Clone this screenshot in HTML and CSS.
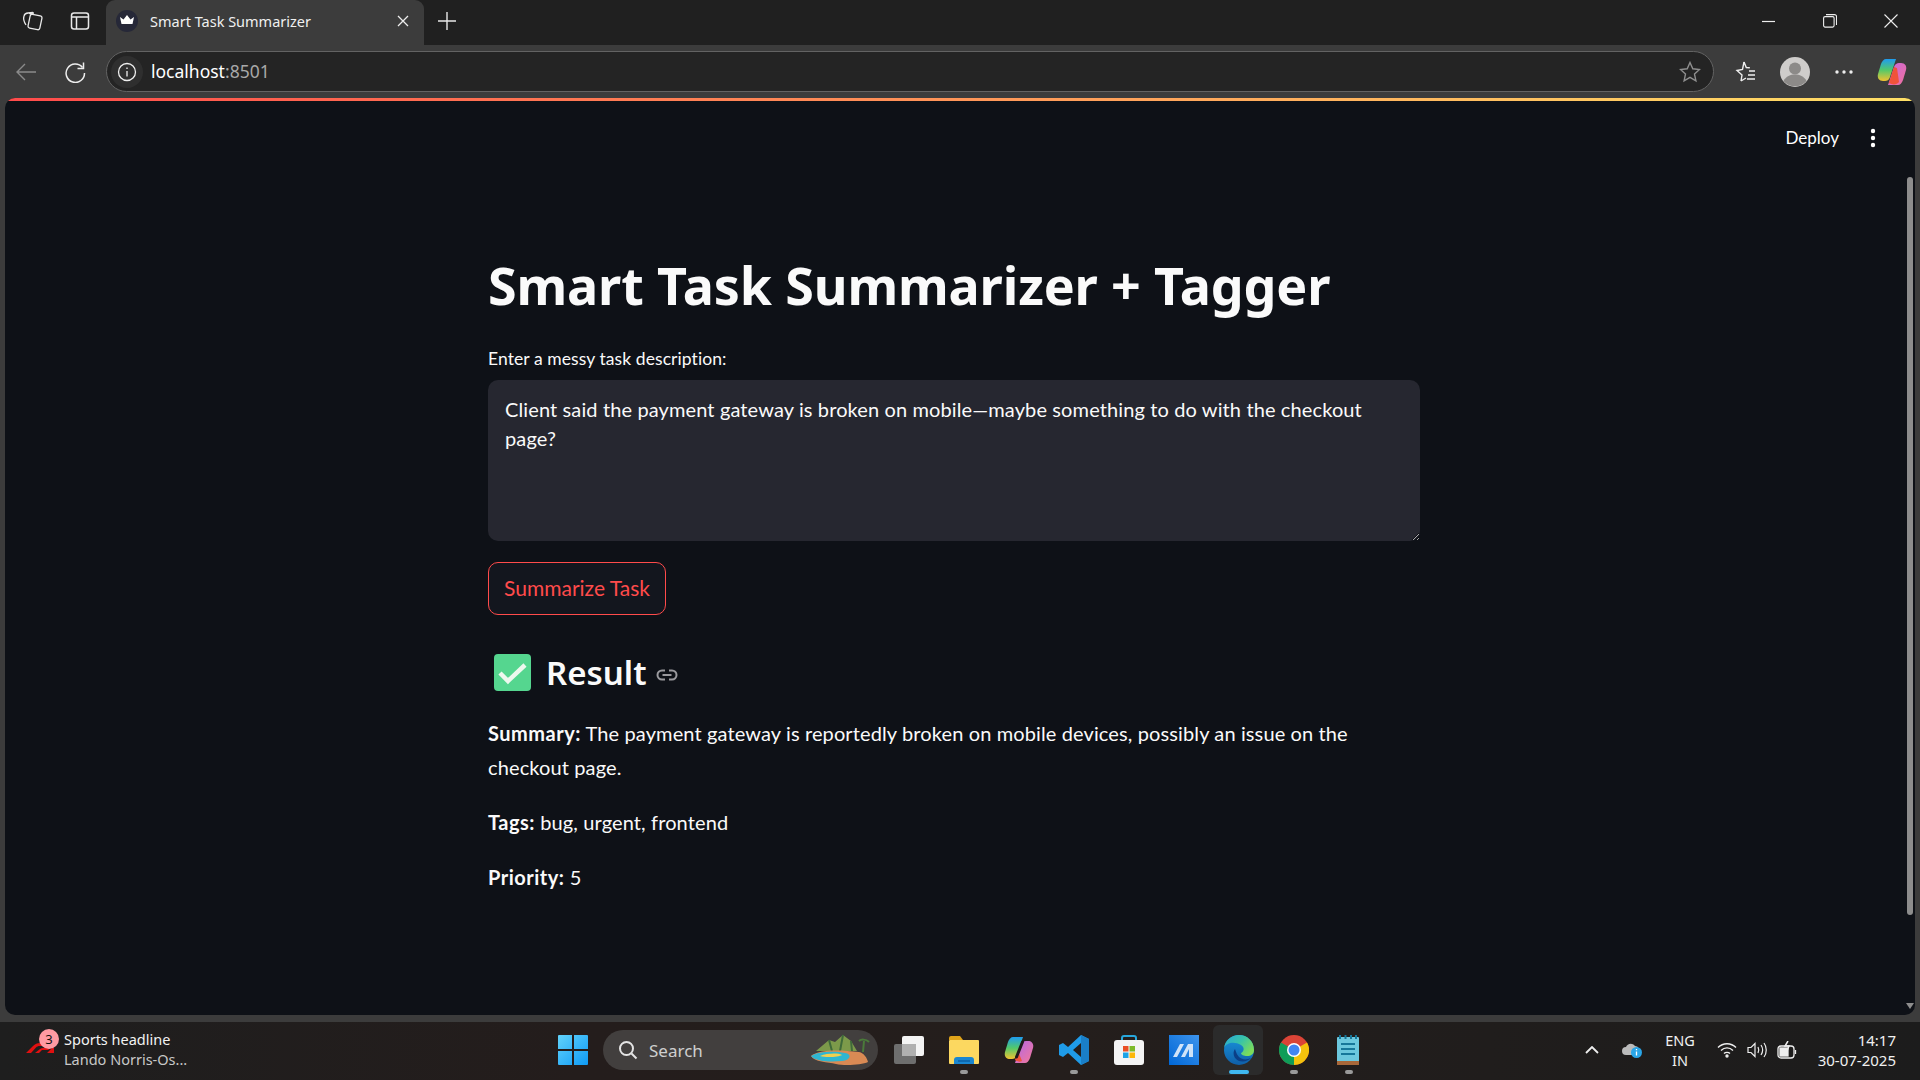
FILE: index.html
```html
<!DOCTYPE html>
<html lang="en">
<head>
    <meta charset="UTF-8">
    <title>Smart Task Summarizer</title>
    <link rel="stylesheet" href="styles.css">
</head>
<body>
    <!-- browser tabs -->
    <div class="tabstrip">
        <div class="strip-btn first">
            <svg width="22" height="22" viewBox="0 0 22 22" fill="none" stroke="#e8e8e8" stroke-width="1.3"><rect x="8" y="5" width="12" height="14" rx="2" transform="rotate(12 14 12)"/><path d="M5 15C3 12 2 9 3 6c.5-2 2-2.800 4-3l5-.5"/><path d="M8 3.500 13 3"/></svg>
        </div>
        <div class="strip-btn">
            <svg width="20" height="20" viewBox="0 0 20 20" fill="none" stroke="#e8e8e8" stroke-width="1.500"><rect x="1.500" y="2" width="17" height="16" rx="2.500"/><path d="M1.500 6h17M6.500 6v12"/></svg>
        </div>
        <div class="tab">
            <span class="favicon">
                <svg width="14" height="11" viewBox="0 0 14 11" fill="#fff"><path d="M0 2l3.500 2.500L7 0l3.500 4.500L14 2l-1.500 7h-11z"/></svg>
            </span>
            <span class="tab-title">Smart Task Summarizer</span>
            <svg class="tab-close" width="12" height="12" viewBox="0 0 12 12" stroke="#eee" stroke-width="1.300"><path d="M1 1l10 10M11 1L1 11"/></svg>
        </div>
        <svg class="new-tab" width="18" height="18" viewBox="0 0 18 18" stroke="#e8e8e8" stroke-width="1.400"><path d="M9 0v18M0 9h18"/></svg>
        <div class="window-btns">
            <svg width="14" height="14" viewBox="0 0 14 14" stroke="#eee" stroke-width="1.200"><path d="M0 7.500h13"/></svg>
            <svg width="14" height="14" viewBox="0 0 14 14" fill="none" stroke="#eee" stroke-width="1.100"><rect x=".6" y="2.600" width="10.500" height="10.500" rx="1.500"/><path d="M3 .6h8.500a2 2 0 0 1 2 2V11"/></svg>
            <svg width="14" height="14" viewBox="0 0 14 14" stroke="#eee" stroke-width="1.100"><path d="M.5.500l13 13M13.500.500l-13 13"/></svg>
        </div>
    </div>

    <!-- address bar -->
    <div class="toolbar">
        <svg class="nav-icon back" width="22" height="20" viewBox="0 0 22 20" fill="none" stroke="#8a8a8a" stroke-width="1.400"><path d="M21 10H2M10 2l-8 8 8 8"/></svg>
        <svg class="nav-icon reload" width="22" height="22" viewBox="0 0 22 22" fill="none" stroke="#eee" stroke-width="1.500"><path d="M18.500 6.500A9.200 9.200 0 1 0 20.500 12"/><path d="M19.500 1.500v6h-6"/></svg>
        <div class="address">
            <span class="info-wrap">
                <svg width="20" height="20" viewBox="0 0 20 20" fill="none" stroke="#eee" stroke-width="1.300"><circle cx="10" cy="10" r="8.500"/><path d="M10 9v5.500M10 5.500v1.500"/></svg>
            </span>
            <span class="url">localhost<span class="url-port">:8501</span></span>
            <svg class="star" width="22" height="22" viewBox="0 0 22 22" fill="none" stroke="#8f8f8f" stroke-width="1.400"><path d="M11 1.500l2.800 6.300 6.700.7-5 4.600 1.400 6.700L11 16.400l-5.900 3.400 1.400-6.700-5-4.600 6.700-.7z"/></svg>
        </div>
        <div class="tool-icons">
            <svg width="22" height="22" viewBox="0 0 22 22" fill="none" stroke="#eee" stroke-width="1.400"><path d="M10 1l2.300 5.500 3.500.3M7 20l1-6-5-4.500 5.500-1L10 1M7 20l5-3"/><path d="M15 10h6M14 14h7M13 18h8"/></svg>
            <svg width="30" height="30" viewBox="0 0 30 30"><circle cx="15" cy="15" r="15" fill="#cfcdcb"/><circle cx="15" cy="11.500" r="6" fill="#8c8a88"/><path d="M3.500 24c2.500-5 7-6.500 11.500-6.500S24 19 26.500 24A15 15 0 0 1 3.500 24z" fill="#8c8a88"/></svg>
            <svg width="18" height="4" viewBox="0 0 18 4" fill="#eee"><circle cx="2" cy="2" r="1.700"/><circle cx="9" cy="2" r="1.700"/><circle cx="16" cy="2" r="1.700"/></svg>
            <svg width="30" height="28" viewBox="0 0 30 28">
                <defs>
                    <linearGradient id="copA" x1="0" y1="0" x2="0" y2="1"><stop offset="0" stop-color="#1f9cf0"/><stop offset=".5" stop-color="#52c96a"/><stop offset="1" stop-color="#f2c230"/></linearGradient>
                    <linearGradient id="copB" x1="0" y1="0" x2="1" y2="1"><stop offset="0" stop-color="#c868e0"/><stop offset="1" stop-color="#f0709a"/></linearGradient>
                </defs>
                <path d="M9 1h10l-6 18c-1 3-3 4-5 4H6c-4 0-6-3-5-7l3-10c1-3 3-5 5-5z" fill="url(#copA)"/>
                <path d="M21 27H11l6-18c1-3 3-4 5-4h2c4 0 6 3 5 7l-3 10c-1 3-3 5-5 5z" fill="url(#copB)"/>
                <path d="M17 9l-5 16c3 2 8 2 10-1l-2-14z" fill="#f0533a"/>
            </svg>
        </div>
    </div>

    <!-- the streamlit page -->
    <div class="viewport">
        <main class="app">
            <div class="accent-bar"></div>
            <div class="app-header">
                <span class="deploy">Deploy</span>
                <svg width="6" height="20" viewBox="0 0 6 20" fill="#fff"><circle cx="3" cy="3" r="2.200"/><circle cx="3" cy="10" r="2.200"/><circle cx="3" cy="17" r="2.200"/></svg>
            </div>
            <div class="content">
                <h1>Smart Task Summarizer + Tagger</h1>
                <label class="field-label" for="task">Enter a messy task description:</label>
                <div class="textarea-wrap">
                    <textarea id="task">Client said the payment gateway is broken on mobile—maybe something to do with the checkout page?</textarea>
                </div>
                <button class="summarize-btn">Summarize Task</button>
                <h3 class="result-heading">
                    <svg class="check" width="37" height="37" viewBox="0 0 37 37"><rect width="37" height="37" rx="4" fill="#55d68f"/><path d="M6 19l8 8L31 11" fill="none" stroke="#eef8ee" stroke-width="4.500"/></svg>
                    <span>Result</span>
                    <svg class="link-icon" width="22" height="12" viewBox="0 0 22 12" fill="none" stroke="#9a9a9e" stroke-width="2"><path d="M9 1.500H6a4.500 4.500 0 0 0 0 9h3M13 1.500h3a4.500 4.500 0 0 1 0 9h-3M6.500 6h9"/></svg>
                </h3>
                <p><strong>Summary:</strong> The payment gateway is reportedly broken on mobile devices, possibly an issue on the checkout page.</p>
                <p><strong>Tags:</strong> bug, urgent, frontend</p>
                <p><strong>Priority:</strong> 5</p>
            </div>
            <div class="scroll-thumb"></div>
            <div class="scroll-arrow"></div>
        </main>
    </div>

    <!-- windows taskbar -->
    <footer class="taskbar">
        <div class="news">
            <span class="news-logo">
                <svg width="28" height="10" viewBox="0 0 28 10" fill="#e01010"><path d="M0 10l7-7c2-2 4-3 7-3h14l-4 3H14c-2 0-3 .5-4 1.500L5 10zM9 10l5-4c1-.8 2-1 3-1h8l-3 2h-5c-1 0-1.500.3-2 1l-2 2zM21 10l5-5h2v5z"/></svg>
                <span class="news-badge">3</span>
            </span>
            <div class="news-text">
                <span>Sports headline</span>
                <span class="news-sub">Lando Norris-Os...</span>
            </div>
        </div>

        <div class="task-icons">
            <span class="slot">
                <svg width="30" height="30" viewBox="0 0 30 30">
                    <defs><linearGradient id="winG" x1="0" y1="0" x2="1" y2="1"><stop offset="0" stop-color="#62d3fb"/><stop offset="1" stop-color="#0f9af5"/></linearGradient></defs>
                    <path d="M0 1a1 1 0 0 1 1-1h13v14H0zM16 0h13a1 1 0 0 1 1 1v13H16zM0 16h14v14H1a1 1 0 0 1-1-1zM16 16h14v13a1 1 0 0 1-1 1H16z" fill="url(#winG)"/>
                </svg>
            </span>
            <div class="search">
                <svg width="20" height="20" viewBox="0 0 20 20" fill="none" stroke="#e4e4e4" stroke-width="2"><circle cx="8.500" cy="8.500" r="6.500"/><path d="M13.500 13.500l5 5"/></svg>
                <span>Search</span>
                <svg class="island" width="60" height="32" viewBox="0 0 60 32">
                    <path d="M6 17L19 6l6 2 8-7 8 6 6 10z" fill="#7c9a4a"/>
                    <path d="M19 6l3 11M33 1l-3 16M41 7l1 10" stroke="#3f6a3a" stroke-width="2"/>
                    <path d="M1 22c8-7 30-6 48-4 5 1 8 6 9 10-6 3-24 4-32 2C18 28 4 28 1 22z" fill="#d98a54"/>
                    <path d="M1 22c8-5 24-5 34-3 7 1 6 7-3 8-10 1-26 1-31-5z" fill="#2fb6d0"/>
                    <path d="M10 22c8-3 18-3 22-1-3 2-16 3-22 1z" fill="#f0d050"/>
                    <path d="M53 18l1-11M49 7c2-2 7-2 10 1" stroke="#4a7a3a" stroke-width="2" fill="none"/>
                </svg>
            </div>
            <span class="slot">
                <svg width="30" height="28" viewBox="0 0 30 28"><rect y="8" width="22" height="20" rx="2" fill="#6e6e6e"/><rect x="8" width="22" height="20" rx="2" fill="#f4f4f4"/><rect x="8" y="8" width="14" height="12" fill="#b0b0b0"/></svg>
            </span>
            <span class="slot running">
                <svg width="30" height="28" viewBox="0 0 30 28"><path d="M0 2a2 2 0 0 1 2-2h9l3 4H0z" fill="#e0a41a"/><rect y="4" width="30" height="24" rx="1" fill="#fcd860"/><path d="M5 28v-4a3 3 0 0 1 3-3h14a3 3 0 0 1 3 3v4z" fill="#1a86d0"/><path d="M9 25h12" stroke="#0b5fa5" stroke-width="1.500"/></svg>
            </span>
            <span class="slot">
                <svg width="30" height="28" viewBox="0 0 30 28">
                    <defs>
                        <linearGradient id="copC" x1="0" y1="0" x2="0" y2="1"><stop offset="0" stop-color="#1f9cf0"/><stop offset=".5" stop-color="#52c96a"/><stop offset="1" stop-color="#f2c230"/></linearGradient>
                        <linearGradient id="copD" x1="0" y1="0" x2="1" y2="1"><stop offset="0" stop-color="#b068e8"/><stop offset="1" stop-color="#f5789a"/></linearGradient>
                    </defs>
                    <path d="M9 1h10l-6 18c-1 3-3 4-5 4H6c-4 0-6-3-5-7l3-10c1-3 3-5 5-5z" fill="url(#copC)"/>
                    <path d="M21 27H11l6-18c1-3 3-4 5-4h2c4 0 6 3 5 7l-3 10c-1 3-3 5-5 5z" fill="url(#copD)"/>
                    <path d="M14 15l-3 9c3 2 5 2 7 1z" fill="#f0533a"/>
                    <path d="M18.500 6l-6 15" stroke="#1f1a1a" stroke-width="3" stroke-linecap="round"/>
                </svg>
            </span>
            <span class="slot running">
                <svg width="30" height="30" viewBox="0 0 30 30"><path d="M22 0l8 4v22l-8 4-13-12-5 4-4-2V10l4-2 5 4zM22 8l-8 7 8 7z" fill="#1f9be8"/><path d="M22 0l8 4v22l-8 4z" fill="#1a7fc8"/></svg>
            </span>
            <span class="slot">
                <svg width="30" height="30" viewBox="0 0 30 30"><path d="M8 6V3a2 2 0 0 1 2-2h10a2 2 0 0 1 2 2v3" fill="none" stroke="#27a7dc" stroke-width="2"/><rect y="5" width="30" height="25" rx="3" fill="#f4f4f4"/><rect x="9" y="11" width="5.500" height="5.500" fill="#ea4f25"/><rect x="15.500" y="11" width="5.500" height="5.500" fill="#7dba2a"/><rect x="9" y="17.500" width="5.500" height="5.500" fill="#1ca2e6"/><rect x="15.500" y="17.500" width="5.500" height="5.500" fill="#fdb80b"/></svg>
            </span>
            <span class="slot">
                <svg width="30" height="30" viewBox="0 0 30 30">
                    <defs><linearGradient id="mG" x1="0" y1="1" x2="1" y2="0"><stop offset="0" stop-color="#0067d6"/><stop offset="1" stop-color="#3d94ec"/></linearGradient></defs>
                    <rect width="30" height="30" fill="url(#mG)"/>
                    <path d="M4 22l7-13h4L8 22zM12 22l7-13h5v13h-4v-8l-4 8z" fill="#cfe3f8"/>
                </svg>
            </span>
            <span class="slot active">
                <svg width="30" height="30" viewBox="0 0 30 30">
                    <defs>
                        <linearGradient id="edgeA" x1="0" y1="0" x2="1" y2=".6"><stop offset="0" stop-color="#2aa8d8"/><stop offset=".55" stop-color="#38c4a8"/><stop offset="1" stop-color="#7cdc5a"/></linearGradient>
                        <linearGradient id="edgeB" x1="0" y1="0" x2="0" y2="1"><stop offset="0" stop-color="#1a96de"/><stop offset="1" stop-color="#0f5fa8"/></linearGradient>
                    </defs>
                    <circle cx="15" cy="15" r="15" fill="url(#edgeB)"/>
                    <path d="M0 13C1 5 8 0 15 0c8 0 15 6 15 15 0 4-3 6-7 6-3 0-6-1-6-3 3-1 4-6 0-8C10 6 2 8 0 13z" fill="url(#edgeA)"/>
                    <path d="M11 14c-3 4-1 10 4 12 5 1 9 0 12-3-4 2-9 2-12-1-2-2-3-5-4-8z" fill="#0b3f86"/>
                </svg>
            </span>
            <span class="slot running">
                <svg width="30" height="30" viewBox="0 0 30 30"><circle cx="15" cy="15" r="15" fill="#db4437"/><path d="M15 15L28 7.500A15 15 0 0 1 15 30z" fill="#f4c20d"/><path d="M15 15v15A15 15 0 0 1 2 7.500z" fill="#0f9d58"/><circle cx="15" cy="15" r="7" fill="#fff"/><circle cx="15" cy="15" r="5.500" fill="#4285f4"/></svg>
            </span>
            <span class="slot running">
                <svg width="24" height="30" viewBox="0 0 24 30"><rect y="2" width="22" height="28" rx="1" fill="#6cc8de"/><rect y="26" width="22" height="4" fill="#a8683a"/><path d="M4 9h14M4 14h14M4 19h14" stroke="#16779a" stroke-width="2"/><path d="M3 0v4M8.500 0v4M14 0v4M19 0v4" stroke="#16779a" stroke-width="2"/></svg>
            </span>
        </div>

        <div class="tray">
            <svg class="tray-chevron" width="14" height="8" viewBox="0 0 14 8" fill="none" stroke="#eee" stroke-width="1.800"><path d="M1 7l6-6 6 6"/></svg>
            <svg class="tray-cloud" width="20" height="16" viewBox="0 0 20 16"><path d="M4 13a4 4 0 0 1 0-8c1-3 6-5 9-1 3 0 5 3 3 6l-3 3z" fill="#bbb"/><circle cx="14.500" cy="10.500" r="5.500" fill="#2aa6e8"/><path d="M14.500 9.500v4M14.500 7v1.200" stroke="#fff" stroke-width="1.300"/></svg>
            <div class="lang"><span>ENG</span><span>IN</span></div>
            <svg width="20" height="16" viewBox="0 0 20 16" fill="none" stroke="#eee" stroke-width="1.400"><path d="M1 5.500c5-5 13-5 18 0M4 8.500c3.500-3.500 8.500-3.500 12 0M7 11.500c1.500-1.500 4.500-1.500 6 0"/><circle cx="10" cy="14" r="1" fill="#eee"/></svg>
            <svg width="20" height="16" viewBox="0 0 20 16" fill="none" stroke="#eee" stroke-width="1.200"><path d="M1 5.500h3l4-4v13l-4-4H1zM11 5c1 2 1 4 0 6M14 3c2 3 2 7 0 10M17 1c3 4 3 10 0 14"/></svg>
            <svg width="20" height="18" viewBox="0 0 20 18" fill="none" stroke="#eee" stroke-width="1.300"><rect x="1" y="5" width="16" height="12" rx="3"/><rect x="3" y="7" width="8" height="8" fill="#eee"/><path d="M18.500 9v4"/><path d="M11 0L8 5h4l-2 5" stroke-width="1.500"/></svg>
            <div class="clock"><span>14:17</span><span>30-07-2025</span></div>
        </div>
    </footer>
</body>
</html>
```

FILE: styles.css
```css
* {
    box-sizing: border-box;
}
html, body {
    height: 100%;
}
body {
    margin: 0;
    display: flex;
    flex-direction: column;
    overflow: hidden;
    background-color: #3c3c3c;
    color: #fff;
    font-family: "Noto Sans", sans-serif;
}

/* browser chrome */
.tabstrip {
    height: 45px;
    flex: none;
    display: flex;
    align-items: center;
    background-color: #202020;
}
.strip-btn {
    width: 47px;
    margin-bottom: 3px;
    display: flex;
    justify-content: center;
}
.strip-btn.first {
    width: 56px;
    padding-left: 8px;
}
.tab {
    width: 318px;
    height: 45px;
    margin-left: 3px;
    padding: 0 15px 4px 10px;
    display: flex;
    align-items: center;
    background-color: #3c3c3c;
    border-radius: 9px 9px 0 0;
}
.favicon {
    width: 22px;
    height: 22px;
    border-radius: 50%;
    background-color: #262838;
    display: flex;
    align-items: center;
    justify-content: center;
}
.tab-title {
    flex: 1;
    margin-left: 12px;
    font-size: 14.500px;
    color: #f0f0f0;
}
.new-tab {
    margin-left: 14px;
    margin-bottom: 3px;
}
.window-btns {
    margin-left: auto;
    margin-bottom: 3px;
    padding-right: 22px;
    display: flex;
    gap: 47px;
    align-items: center;
}

.toolbar {
    height: 53px;
    flex: none;
    display: flex;
    align-items: center;
    background-color: #3c3c3c;
}
.nav-icon.back {
    margin-left: 15px;
}
.nav-icon.reload {
    margin-left: 27px;
}
.address {
    width: 1608px;
    height: 41px;
    margin-left: 20px;
    display: flex;
    align-items: center;
    background-color: #242424;
    border: 1px solid #636363;
    border-radius: 21px;
}
.info-wrap {
    width: 32px;
    height: 32px;
    margin-left: 4px;
    border-radius: 50%;
    background-color: #2f2f2f;
    display: flex;
    align-items: center;
    justify-content: center;
}
.url {
    margin-left: 8px;
    margin-bottom: 2px;
    font-size: 17.500px;
    color: #fff;
}
.url-port {
    color: #a8a8a8;
}
.star {
    margin-left: auto;
    margin-right: 12px;
}
.tool-icons {
    flex: 1;
    padding: 0 13px 0 20px;
    display: flex;
    align-items: center;
    justify-content: space-between;
}

/* streamlit app */
.viewport {
    flex: 1;
    min-height: 0;
    padding: 0 5px;
    background-color: #3c3c3c;
}
.app {
    position: relative;
    height: 100%;
    overflow: hidden;
    background-color: #0e1117;
    border-radius: 10px;
}
.accent-bar {
    height: 3px;
    background: linear-gradient(90deg, #ff4b4b, #ffe066);
}
.app-header {
    height: 64px;
    padding: 9px 39px 0 0;
    display: flex;
    justify-content: flex-end;
    align-items: center;
    gap: 31px;
}
.deploy {
    font-family: Lato, sans-serif;
    font-size: 17px;
}
.content {
    width: 932px;
    margin-left: 483px;
    padding-top: 87px;
    font-family: Lato, sans-serif;
}
h1 {
    margin: 0;
    font-family: "Noto Sans", sans-serif;
    font-size: 52px;
    line-height: 66px;
    font-weight: 700;
    letter-spacing: -.13px;
    color: #fafafa;
}
.field-label {
    display: block;
    margin-top: 30px;
    font-size: 17.500px;
    line-height: 22px;
    letter-spacing: .08px;
    color: #fafafa;
}
.textarea-wrap {
    height: 161px;
    margin-top: 10px;
}
textarea {
    display: block;
    width: 100%;
    height: 100%;
    padding: 15px 17px;
    border: none;
    border-radius: 10px;
    outline: none;
    font-family: Lato, sans-serif;
    font-size: 20px;
    line-height: 29px;
    letter-spacing: .12px;
    color: #fafafa;
    background-color: #262730;
}
.summarize-btn {
    display: block;
    width: 178px;
    height: 53px;
    margin-top: 21px;
    padding-bottom: 3px;
    border: 1px solid #ff4b4b;
    border-radius: 10px;
    font-family: Lato, sans-serif;
    font-size: 21px;
    color: #ff4b4b;
    background-color: #13161e;
}
.result-heading {
    height: 50px;
    margin: 32px 0 0;
    display: flex;
    align-items: center;
    font-family: "Noto Sans", sans-serif;
    font-size: 33px;
    font-weight: 600;
    color: #fafafa;
}
.check {
    margin-left: 6px;
    margin-right: 15px;
}
.link-icon {
    margin-left: 9px;
    margin-top: 6px;
}
p {
    margin: 0 0 21px;
    font-size: 20px;
    line-height: 34px;
    letter-spacing: .12px;
    color: #fafafa;
}
.result-heading + p {
    margin-top: 19px;
}
strong {
    font-weight: 700;
    letter-spacing: .5px;
}
.scroll-thumb {
    position: absolute;
    top: 79px;
    right: 2px;
    width: 6px;
    height: 738px;
    border-radius: 3px;
    background-color: #8d8d8d;
}
.scroll-arrow {
    position: absolute;
    right: 1px;
    bottom: 6px;
    border-left: 4px solid transparent;
    border-right: 4px solid transparent;
    border-top: 6px solid #8d8d8d;
}

/* windows taskbar */
.taskbar {
    height: 58px;
    flex: none;
    margin-top: 7px;
    display: flex;
    align-items: center;
    background: linear-gradient(90deg, #1e1e1e 0%, #241d1c 30%, #241e1c 55%, #1c1c1c 100%);
}
.news {
    width: 545px;
    padding: 0 0 4px 26px;
    display: flex;
    align-items: center;
}
.news-logo {
    position: relative;
    width: 38px;
    height: 30px;
    display: flex;
    align-items: flex-end;
    padding-bottom: 11px;
}
.news-badge {
    position: absolute;
    top: -5px;
    left: 13px;
    width: 20px;
    height: 20px;
    border-radius: 50%;
    background-color: #ff9aa2;
    color: #111;
    font-size: 13px;
    line-height: 20px;
    text-align: center;
}
.news-text {
    display: flex;
    flex-direction: column;
    font-size: 14.500px;
    line-height: 20px;
    color: #f2f2f2;
}
.news-sub {
    color: #c8c8c8;
}
.task-icons {
    margin-bottom: 2px;
    display: flex;
    align-items: center;
}
.slot {
    position: relative;
    width: 55px;
    height: 50px;
    display: flex;
    align-items: center;
    justify-content: center;
}
.slot > svg {
    position: relative;
}
.slot.active::before {
    content: "";
    position: absolute;
    top: 0;
    bottom: 0;
    left: 2px;
    right: 3px;
    border-radius: 6px;
    background-color: #2b2b2b;
}
.slot.running::after,
.slot.active::after {
    content: "";
    position: absolute;
    bottom: 1px;
    left: 50%;
    width: 8px;
    height: 4px;
    margin-left: -4px;
    border-radius: 2px;
    background-color: #9a9a9a;
}
.slot.active::after {
    width: 20px;
    margin-left: -10px;
    background-color: #3fb8f0;
}
.search {
    width: 275px;
    height: 40px;
    margin: 0 3px;
    padding: 0 8px 0 15px;
    display: flex;
    align-items: center;
    gap: 11px;
    border-radius: 20px;
    background-color: #423f3e;
    font-size: 17px;
    color: #cfcfcf;
}
.island {
    margin-left: auto;
}
.tray {
    flex: 1;
    padding-right: 24px;
    padding-bottom: 2px;
    display: flex;
    align-items: center;
    justify-content: flex-end;
    gap: 10px;
}
.tray-chevron {
    margin-right: 13px;
}
.tray-cloud {
    margin-right: 9px;
}
.lang {
    width: 38px;
    margin-right: 8px;
    display: flex;
    flex-direction: column;
    align-items: center;
    font-size: 14.500px;
    line-height: 20px;
    color: #f0f0f0;
}
.clock {
    width: 80px;
    margin-left: 9px;
    display: flex;
    flex-direction: column;
    align-items: flex-end;
    font-size: 15px;
    line-height: 20px;
    white-space: nowrap;
    color: #f0f0f0;
}
```
